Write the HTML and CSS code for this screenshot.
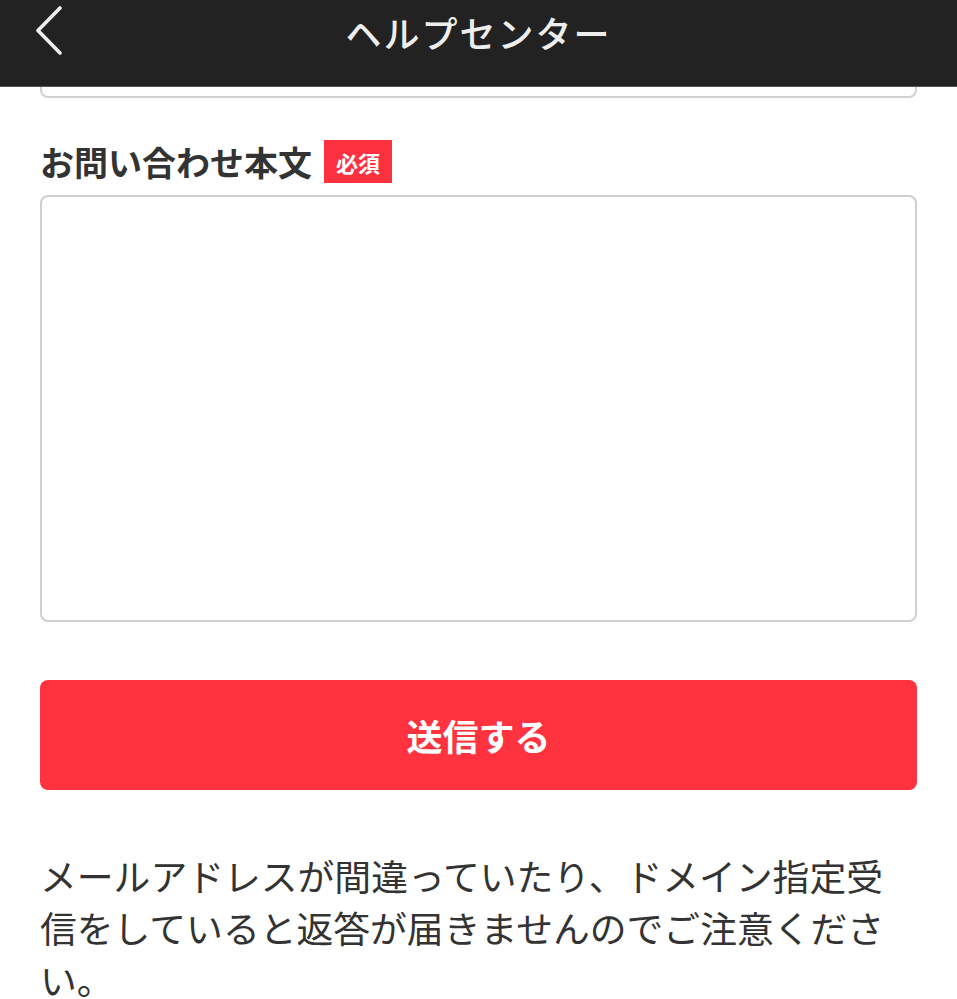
FILE: index.html
```html
<!DOCTYPE html>
<html lang="ja">
<head>
  <meta charset="UTF-8">
  <meta name="viewport" content="width=device-width, initial-scale=1">
  <title>ヘルプセンター</title>
  <link rel="stylesheet" href="styles.css">
</head>
<body>

  <!-- Top bar -->
  <header class="topbar">
    <a class="back-btn" href="#" aria-label="戻る">
      <svg width="30" height="50" viewBox="0 0 30 50">
        <polyline points="26,3 4,25.5 26,48" fill="none" stroke="#eeeeee" stroke-width="3.6" stroke-linecap="round" stroke-linejoin="round"/>
      </svg>
    </a>
    <h1 class="topbar-title">ヘルプセンター</h1>
  </header>

  <main class="form">
    <!-- bottom of the previous field, scrolled under the bar -->
    <div class="prev-field"></div>

    <div class="field-label">
      <span>お問い合わせ本文</span>
      <span class="required">必須</span>
    </div>
    <textarea class="message"></textarea>

    <button class="submit-btn" type="button">送信する</button>

    <p class="note">メールアドレスが間違っていたり、ドメイン指定受信をしていると返答が届きませんのでご注意ください。</p>
  </main>

</body>
</html>
```

FILE: styles.css
```css
/* Global */
body {
  margin: 0;
  padding: 0;
  background: #fff;
  color: #333;
  font-family: "Noto Sans CJK JP", "Noto Sans", sans-serif;
  overflow: hidden;
}

/* Top bar */
.topbar {
  position: relative;
  height: 87px;
  background: #222;
  display: flex;
  justify-content: center;
  border-bottom: 1px solid #555;
  box-sizing: border-box;
}
.back-btn {
  position: absolute;
  left: 34px;
  top: 5px;
  display: block;
  line-height: 0;
}
.topbar-title {
  margin: 0;
  padding-top: 8px;
  font-size: 36px;
  font-weight: 500;
  line-height: 48px;
  color: #eee;
  letter-spacing: 2px;
}

/* Form */
.form {
  padding: 0 40px;
}
.prev-field {
  height: 9px;
  border: 2px solid #d0d0d0;
  border-top: none;
  border-radius: 0 0 8px 8px;
}

.field-label {
  display: flex;
  align-items: center;
  gap: 12px;
  margin-top: 42px;
  height: 43px;
  font-size: 34px;
  font-weight: bold;
  color: #333;
}
.required {
  display: flex;
  align-items: center;
  justify-content: center;
  width: 68px;
  height: 43px;
  background: #fc3140;
  color: #fff;
  font-size: 22px;
  font-weight: bold;
}

.message {
  display: block;
  width: 100%;
  height: 427px;
  margin-top: 12px;
  box-sizing: border-box;
  border: 2px solid #cfcfcf;
  border-radius: 8px;
  resize: none;
  font: inherit;
}

/* Submit */
.submit-btn {
  display: block;
  width: 100%;
  height: 110px;
  margin-top: 58px;
  border: none;
  border-radius: 8px;
  background: #ff3340;
  color: #fff;
  font-family: inherit;
  font-size: 36px;
  font-weight: bold;
  cursor: pointer;
}

/* Note */
.note {
  margin: 59px 0 0;
  font-size: 36.8px;
  line-height: 52px;
  color: #333;
}
```
